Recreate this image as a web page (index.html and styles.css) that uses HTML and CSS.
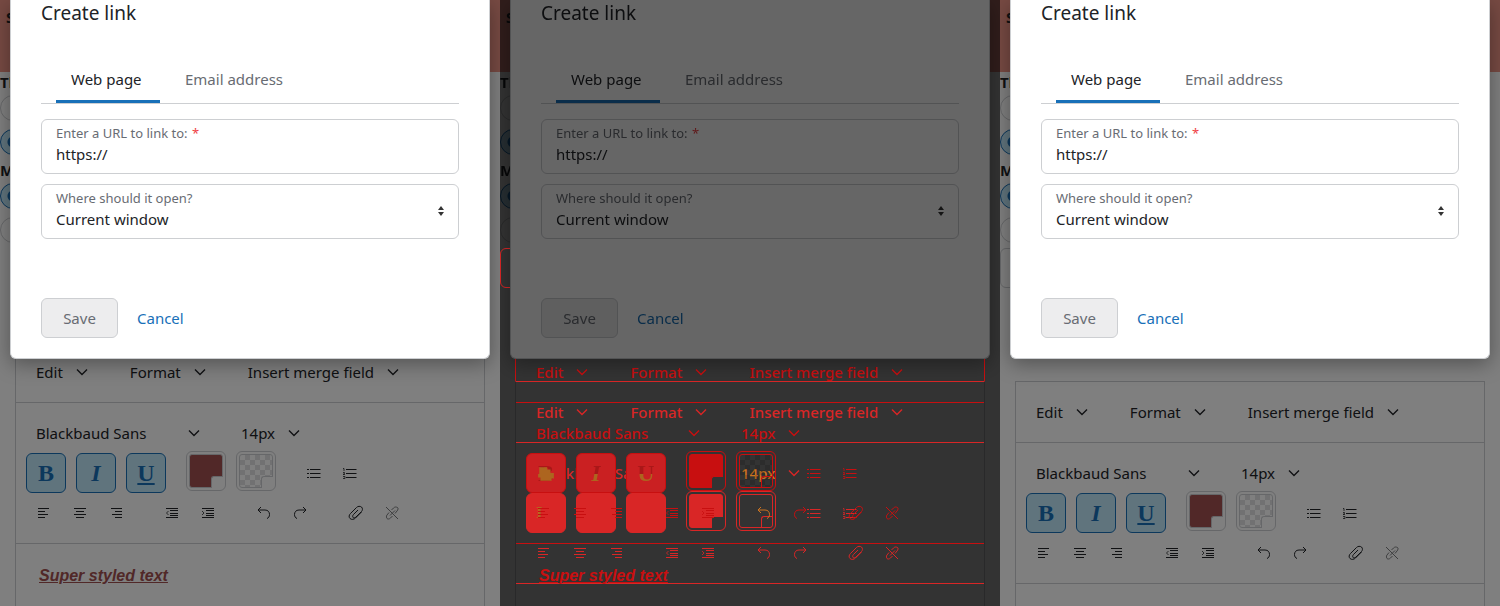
FILE: index.html
```html
<!DOCTYPE html>
<html lang="en">
<head>
<meta charset="utf-8">
<title>Create link</title>
<link rel="stylesheet" href="styles.css">
</head>
<body>
<svg class="defs" aria-hidden="true">
  <symbol id="chev" viewBox="0 0 12 12"><path d="M1 3.5 6 8.5 11 3.5" fill="none" stroke="currentColor" stroke-width="1.4"/></symbol>
  <symbol id="al" viewBox="0 0 16 16"><path d="M2 3.5h11M2 6.5h7M2 9.5h10M2 12.5h7" stroke="currentColor"/></symbol>
  <symbol id="ac" viewBox="0 0 16 16"><path d="M2 3.5h12M4 6.5h8M2 9.5h12M4 12.5h8" stroke="currentColor"/></symbol>
  <symbol id="ar" viewBox="0 0 16 16"><path d="M3 3.5h11M7 6.5h7M4 9.5h10M7 12.5h7" stroke="currentColor"/></symbol>
  <symbol id="out" viewBox="0 0 16 16"><path d="M2 3.5h12M6 5.5h8M6 8.5h8M6 10.5h8M2 12.5h12" stroke="currentColor"/><path d="M4.500 6 2.500 8l2 2" fill="none" stroke="currentColor" stroke-width=".8"/></symbol>
  <symbol id="ind" viewBox="0 0 16 16"><path d="M2 3.500h12M6 5.500h8M6 8.500h8M6 10.500h8M2 12.500h12" stroke="currentColor"/><path d="M2 6l2 2-2 2" fill="none" stroke="currentColor" stroke-width=".8"/></symbol>
  <symbol id="ul" viewBox="0 0 16 16"><path d="M1 4.500h2M1 8.500h2M1 12.500h2M4 4.500h10.500M4 8.500h10.500M4 12.500h10.500" stroke="currentColor"/></symbol>
  <symbol id="ol" viewBox="0 0 16 16"><path d="M4 4.500h10.500M4 8.500h10.500M4 12.500h10.500" stroke="currentColor"/><path d="M1 3.500h1v2.500M1 7.500h1.500v1L1 9.500h2M1 11.500h2v2H1" fill="none" stroke="currentColor" stroke-width=".8"/></symbol>
  <symbol id="un" viewBox="0 0 16 16"><path d="M5 2 2 5l3 3M2 5h7c3 0 4.500 2 4.500 4.500 0 2-1 3.500-2.500 4" fill="none" stroke="currentColor"/></symbol>
  <symbol id="re" viewBox="0 0 16 16"><path d="M11 2l3 3-3 3M14 5H7C4 5 2.500 7 2.500 9.500c0 2 1 3.500 2.500 4" fill="none" stroke="currentColor"/></symbol>
  <symbol id="clip" viewBox="0 0 16 16"><path d="M13.500 7 7.500 13c-1.500 1.500-4 2-5.500.5s-1-3.500.5-5L8.500 2.500c1.500-1.500 3.500-1.500 5-.5 1.500 1.500 1 3.500 0 4.500L8 12c-1 1-2.500 1-3 .5s-.5-2 .5-3L10 5" fill="none" stroke="currentColor"/></symbol>
  <symbol id="unl" viewBox="0 0 16 16"><path d="M2 2l12 12M7.500 5l2-2c1.500-1.500 3-1 4-.500s.500 2.500-.500 3.500L11 8.500M8.500 11l-2 2c-1.500 1.500-3 1-3.500.500S2 11 3 10l2-2.500M6 10.500l5-5" fill="none" stroke="currentColor"/></symbol>
  <symbol id="blob" viewBox="0 0 16 16"><path d="M2 2h7v2h3v3h3v5h-2v2H3v-3H1V8h1z" fill="currentColor"/></symbol>
</svg>
<main class="stage">

<section class="panel">
  <div class="page">
    <header class="banner">Sample</header>
    <h2 class="legend">Theme</h2>
    <div class="radios"><input type="radio" name="a1" aria-label="Default"><input type="radio" name="a1" aria-label="Modern" checked></div>
    <h2 class="legend second">Mode</h2>
    <div class="radios"><input type="radio" name="a2" aria-label="Light" checked><input type="radio" name="a2" aria-label="Dark"></div>
    <div class="editor high">
      <div class="menus"><button>Edit<svg><use href="#chev"/></svg></button><button>Format<svg><use href="#chev"/></svg></button><button>Insert merge field<svg><use href="#chev"/></svg></button></div>
      <div class="tools">
        <div class="row fonts"><button class="family">Blackbaud Sans<svg><use href="#chev"/></svg></button><button>14px<svg><use href="#chev"/></svg></button></div>
        <div class="row marks"><button class="mark b">B</button><button class="mark i">I</button><button class="mark u">U</button><span class="group swatches"><button class="swatch" aria-label="Font color"><span class="chip"></span></button><button class="swatch" aria-label="Background color"><span class="chip check"></span></button></span><span class="group"><button class="ico" aria-label="Bulleted list"><svg><use href="#ul"/></svg></button><button class="ico" aria-label="Numbered list"><svg><use href="#ol"/></svg></button></span></div>
        <div class="row icons"><span class="group"><button class="ico" aria-label="Align left"><svg><use href="#al"/></svg></button><button class="ico" aria-label="Align center"><svg><use href="#ac"/></svg></button><button class="ico" aria-label="Align right"><svg><use href="#ar"/></svg></button></span><span class="group"><button class="ico" aria-label="Outdent"><svg><use href="#out"/></svg></button><button class="ico" aria-label="Indent"><svg><use href="#ind"/></svg></button></span><span class="group"><button class="ico" aria-label="Undo"><svg><use href="#un"/></svg></button><button class="ico" aria-label="Redo"><svg><use href="#re"/></svg></button></span><span class="group"><button class="ico" aria-label="Link"><svg><use href="#clip"/></svg></button><button class="ico off" aria-label="Unlink"><svg><use href="#unl"/></svg></button></span></div>
      </div>
      <p class="content">Super styled text</p>
    </div>
  </div>
  <div class="shade"></div>
  <form class="modal">
    <h1>Create link</h1>
    <nav class="tabs"><a class="on" href="#web">Web page</a><a href="#email">Email address</a></nav>
    <div class="field"><label for="url1">Enter a URL to link to: <span class="req">*</span></label><input id="url1" type="text" value="https://"></div>
    <div class="field"><label for="open1">Where should it open?</label><select id="open1"><option>Current window</option></select><svg class="sort" viewBox="0 0 8 12"><path d="M4 1l3 4H1zM4 11l3-4H1z"/></svg></div>
    <div class="actions"><button class="save" type="button" disabled>Save</button><button class="cancel" type="button">Cancel</button></div>
  </form>
</section>

<section class="panel dim">
  <div class="page">
    <header class="banner">Sample</header>
    <h2 class="legend">Theme</h2>
    <div class="radios"><input type="radio" name="b1" aria-label="Default"><input type="radio" name="b1" aria-label="Modern" checked></div>
    <h2 class="legend second">Mode</h2>
    <div class="radios"><input type="radio" name="b2" aria-label="Light" checked><input type="radio" name="b2" aria-label="Dark"></div>
    <div class="extra"></div>
    <div class="editor"></div>
  </div>
  <div class="shade"></div>
  <div class="layer after">
    <div class="extra"></div>
    <div class="editor">
      <div class="menus"><button>Edit<svg><use href="#chev"/></svg></button><button>Format<svg><use href="#chev"/></svg></button><button>Insert merge field<svg><use href="#chev"/></svg></button></div>
      <div class="tools">
        <div class="row fonts"><button class="family">Blackbaud Sans<svg><use href="#chev"/></svg></button><button><span class="mix">14px</span><svg><use href="#chev"/></svg></button></div>
        <div class="row marks"><button class="mark stem" aria-label="Bold">I</button><button class="mark" aria-label="Italic"></button><button class="mark" aria-label="Underline"></button><span class="group swatches"><button class="swatch" aria-label="Font color"><span class="chip"></span></button><button class="swatch" aria-label="Background color"><span class="chip check"></span></button></span><span class="group"><button class="ico" aria-label="Bulleted list"><svg><use href="#ul"/></svg></button><button class="ico" aria-label="Numbered list"><svg><use href="#ol"/></svg></button></span></div>
        <div class="row icons"><span class="group"><button class="ico" aria-label="Align left"><svg><use href="#al"/></svg></button><button class="ico" aria-label="Align center"><svg><use href="#ac"/></svg></button><button class="ico" aria-label="Align right"><svg><use href="#ar"/></svg></button></span><span class="group"><button class="ico" aria-label="Outdent"><svg><use href="#out"/></svg></button><button class="ico" aria-label="Indent"><svg><use href="#ind"/></svg></button></span><span class="group"><button class="ico" aria-label="Undo"><svg><use href="#un"/></svg></button><button class="ico" aria-label="Redo"><svg><use href="#re"/></svg></button></span><span class="group"><button class="ico" aria-label="Link"><svg><use href="#clip"/></svg></button><button class="ico" aria-label="Unlink"><svg><use href="#unl"/></svg></button></span></div>
      </div>
    </div>
  </div>
  <div class="layer before">
    <div class="editor">
      <div class="menus"><button>Edit<svg><use href="#chev"/></svg></button><button>Format<svg><use href="#chev"/></svg></button><button>Insert merge field<svg><use href="#chev"/></svg></button></div>
      <div class="tools">
        <div class="row fonts"><button class="family">Blackbaud Sans<svg><use href="#chev"/></svg></button><button>14px<svg><use href="#chev"/></svg></button></div>
        <div class="row marks"><button class="mark b"><span>B</span><svg class="blob"><use href="#blob"/></svg></button><button class="mark i"><span>I</span></button><button class="mark u"><span>U</span></button><span class="group swatches"><button class="swatch" aria-label="Font color"><span class="chip"></span></button><button class="swatch" aria-label="Background color"><span class="chip check"></span></button></span><span class="group"><button class="ico" aria-label="Bulleted list"><svg><use href="#ul"/></svg></button><button class="ico" aria-label="Numbered list"><svg><use href="#ol"/></svg></button></span></div>
        <div class="row icons"><span class="group"><button class="ico" aria-label="Align left"><svg><use href="#al"/></svg></button><button class="ico" aria-label="Align center"><svg><use href="#ac"/></svg></button><button class="ico" aria-label="Align right"><svg><use href="#ar"/></svg></button></span><span class="group"><button class="ico" aria-label="Outdent"><svg><use href="#out"/></svg></button><button class="ico" aria-label="Indent"><svg><use href="#ind"/></svg></button></span><span class="group"><button class="ico mix" aria-label="Undo"><svg><use href="#un"/></svg></button><button class="ico" aria-label="Redo"><svg><use href="#re"/></svg></button></span><span class="group"><button class="ico" aria-label="Link"><svg><use href="#clip"/></svg></button><button class="ico" aria-label="Unlink"><svg><use href="#unl"/></svg></button></span></div>
      </div>
      <p class="content">Super styled text</p>
    </div>
  </div>
  <form class="modal">
    <h1>Create link</h1>
    <nav class="tabs"><a class="on" href="#web">Web page</a><a href="#email">Email address</a></nav>
    <div class="field"><label for="url2">Enter a URL to link to: <span class="req">*</span></label><input id="url2" type="text" value="https://"></div>
    <div class="field"><label for="open2">Where should it open?</label><select id="open2"><option>Current window</option></select><svg class="sort" viewBox="0 0 8 12"><path d="M4 1l3 4H1zM4 11l3-4H1z"/></svg></div>
    <div class="actions"><button class="save" type="button" disabled>Save</button><button class="cancel" type="button">Cancel</button></div>
  </form>
</section>

<section class="panel">
  <div class="page">
    <header class="banner">Sample</header>
    <h2 class="legend">Theme</h2>
    <div class="radios"><input type="radio" name="c1" aria-label="Default"><input type="radio" name="c1" aria-label="Modern" checked></div>
    <h2 class="legend second">Mode</h2>
    <div class="radios"><input type="radio" name="c2" aria-label="Light" checked><input type="radio" name="c2" aria-label="Dark"></div>
    <div class="extra"></div>
    <div class="editor">
      <div class="menus"><button>Edit<svg><use href="#chev"/></svg></button><button>Format<svg><use href="#chev"/></svg></button><button>Insert merge field<svg><use href="#chev"/></svg></button></div>
      <div class="tools">
        <div class="row fonts"><button class="family">Blackbaud Sans<svg><use href="#chev"/></svg></button><button>14px<svg><use href="#chev"/></svg></button></div>
        <div class="row marks"><button class="mark b">B</button><button class="mark i">I</button><button class="mark u">U</button><span class="group swatches"><button class="swatch" aria-label="Font color"><span class="chip"></span></button><button class="swatch" aria-label="Background color"><span class="chip check"></span></button></span><span class="group"><button class="ico" aria-label="Bulleted list"><svg><use href="#ul"/></svg></button><button class="ico" aria-label="Numbered list"><svg><use href="#ol"/></svg></button></span></div>
        <div class="row icons"><span class="group"><button class="ico" aria-label="Align left"><svg><use href="#al"/></svg></button><button class="ico" aria-label="Align center"><svg><use href="#ac"/></svg></button><button class="ico" aria-label="Align right"><svg><use href="#ar"/></svg></button></span><span class="group"><button class="ico" aria-label="Outdent"><svg><use href="#out"/></svg></button><button class="ico" aria-label="Indent"><svg><use href="#ind"/></svg></button></span><span class="group"><button class="ico" aria-label="Undo"><svg><use href="#un"/></svg></button><button class="ico" aria-label="Redo"><svg><use href="#re"/></svg></button></span><span class="group"><button class="ico" aria-label="Link"><svg><use href="#clip"/></svg></button><button class="ico off" aria-label="Unlink"><svg><use href="#unl"/></svg></button></span></div>
      </div>
    </div>
  </div>
  <div class="shade"></div>
  <form class="modal">
    <h1>Create link</h1>
    <nav class="tabs"><a class="on" href="#web">Web page</a><a href="#email">Email address</a></nav>
    <div class="field"><label for="url3">Enter a URL to link to: <span class="req">*</span></label><input id="url3" type="text" value="https://"></div>
    <div class="field"><label for="open3">Where should it open?</label><select id="open3"><option>Current window</option></select><svg class="sort" viewBox="0 0 8 12"><path d="M4 1l3 4H1zM4 11l3-4H1z"/></svg></div>
    <div class="actions"><button class="save" type="button" disabled>Save</button><button class="cancel" type="button">Cancel</button></div>
  </form>
</section>
</main>
</body>
</html>
```
FILE: styles.css
```css
* { box-sizing: border-box; }
body { margin: 0; font: 15px/22px "Noto Sans", "Open Sans", sans-serif; color: #212327; }
button, input, select { font: inherit; color: inherit; margin: 0; padding: 0; border: 0; background: none; }
button { white-space: nowrap; }
.defs { position: absolute; width: 0; height: 0; }
.stage { display: grid; grid-template-columns: repeat(3, 1fr); min-height: 100vh; }
.panel { position: relative; overflow: hidden; display: flex; }
.page { flex: 1; min-width: 0; display: flex; flex-direction: column; background: #fff; }
.shade { position: absolute; inset: 0; background: rgba(0, 0, 0, .5); }

/* sample page */
.banner { height: 72px; padding: 6px; background: #ef9486; font-weight: 700; }
.legend { margin: 0; height: 23px; font-size: 15px; line-height: 20px; font-weight: 700; }
.legend.second { height: 28px; line-height: 30px; }
.radios { display: flex; flex-direction: column; gap: 8px; }
.radios input { appearance: none; width: 26px; height: 26px; border: 1px solid #cdcfd2; border-radius: 50%; }
.radios input:checked { border-color: #1870b8; background: radial-gradient(circle, #1870b8 5px, #c1e8fb 6px); }
.extra { width: 200px; height: 40px; margin-top: 5px; border: 1px solid #cdcfd2; border-radius: 6px; }

/* editor */
.editor { flex: 1 0 auto; margin: 93px 15px 0; border: 1px solid #cdcfd2; border-bottom: 0; }
.editor.high { margin-top: 98px; }
.menus { display: flex; align-items: center; gap: 22px; height: 61px; padding: 0 10px; border-bottom: 1px solid #cdcfd2; }
.menus button, .fonts button { display: flex; align-items: center; justify-content: space-between; gap: 13px; padding: 0 10px; }
.menus svg, .fonts svg { width: 12px; height: 12px; }
.tools { padding: 10px; border-bottom: 1px solid #cdcfd2; }
.row { display: flex; height: 40px; align-items: center; gap: 20px; }
.row.fonts { gap: 21px; }
.family { width: 184px; }
.row.marks { gap: 10px; }
.group { display: flex; }
.marks .group { margin-left: 10px; }
.swatches { gap: 10px; }
.mark { display: grid; place-items: center; width: 40px; height: 40px; border: 1px solid #1870b8; border-radius: 6px; background: #c1e8fb; color: #1870b8; font: 700 24px/28px "Liberation Serif", serif; }
.i { font-style: italic; }
.u { text-decoration: underline; }
.swatch { width: 40px; height: 40px; margin-top: -4px; padding: 2px; border: 1px solid #cdcfd2; border-radius: 6px; }
.chip { position: relative; display: block; height: 34px; border: 1px solid #cdcfd2; border-radius: 3px; background: #a25050; }
.chip::after { content: ""; position: absolute; right: -1px; bottom: -1px; width: 11px; height: 11px; border: 1px solid #cdcfd2; border-width: 1px 0 0 1px; border-radius: 3px 0 0; background: #fff; }
.check { background: repeating-conic-gradient(#e2e3e4 0 25%, #fff 0 50%) 0 0 / 10px 10px; }
.ico { display: grid; place-items: center; width: 36px; height: 40px; }
.ico svg { width: 16px; height: 16px; }
.off { opacity: .6; }
.content { margin: 21px 23px; font: italic 700 16px/22px "Liberation Sans", sans-serif; color: #a25050; text-decoration: underline; }

/* comparison layers */
.dim .page, .dim .modal { filter: brightness(.4); }
.dim .page .extra { visibility: hidden; }
.layer { position: absolute; inset: 0; display: flex; flex-direction: column; color: var(--ink); font-weight: 500; }
.layer .editor, .layer .menus, .layer .tools { border-color: var(--ink); }
.layer .editor { border-left-color: transparent; border-right-color: transparent; }
.layer .menus svg, .layer .fonts svg { stroke-width: 2; }
.after { --ink: #d92626; padding-top: 243px; }
.after .extra { border-color: var(--ink); }
.before { --ink: #c80f10; padding-top: 341px; }
.before .editor { margin-top: 0; background: linear-gradient(var(--ink), var(--ink)) 0 0 / 1px 40px no-repeat border-box, linear-gradient(var(--ink), var(--ink)) 100% 0 / 1px 40px no-repeat border-box; }
.layer .mark { border-color: var(--ink); background: #d92626; }
.before .mark { position: relative; background: #ca2022; text-decoration: none; }
.before .mark span { background: linear-gradient(#aa1718 55%, #ad651f 55%); background-clip: text; color: transparent; }
.before .b span { background: #aa1718; background-clip: text; }
.before .blob { position: absolute; left: 10px; top: 11px; width: 18px; height: 18px; color: #ad651f; }
.after .stem { place-items: center start; padding-left: 9px; color: #b36a20; font-size: 17px; }
.layer .swatch, .layer .chip, .layer .chip::after { border-color: var(--ink); }
.layer .chip { background: var(--ink); }
.layer .chip::after { background: #333; }
.layer .check, .layer .check::after { background: none; }
.before .check { background: repeating-conic-gradient(rgba(0, 0, 0, .14) 0 25%, transparent 0 50%) 0 0 / 10px 10px; }
.mix { color: #cd7420; }
.before .content { color: var(--ink); }

/* dialog */
.modal { position: absolute; top: 0; left: 10px; right: 10px; padding: 0 30px 20px; border: 1px solid #cdcfd2; border-top: 0; border-radius: 0 0 6px 6px; background: #fff; box-shadow: 0 5px 20px rgba(0, 0, 0, .35); }
.modal h1 { margin: 0 0 31px; font-size: 19px; line-height: 26px; font-weight: 400; }
.tabs { display: flex; gap: 10px; padding-left: 15px; border-bottom: 1px solid #cdcfd2; }
.tabs a { min-width: 104px; padding: 11px 15px 10px; border-bottom: 3px solid transparent; color: #686c73; text-decoration: none; }
.tabs .on { border-color: #1870b8; color: #212327; }
.field { position: relative; margin-top: 10px; padding: 4px 14px 8px; border: 1px solid #cdcfd2; border-radius: 6px; }
.tabs + .field { margin-top: 15px; }
.field label { display: block; font-size: 13px; line-height: 19px; color: #686c73; }
.req { margin-left: 1px; color: #ef4044; }
.field input, .field select { display: block; width: 100%; height: 22px; appearance: none; outline: 0; }
.sort { position: absolute; right: 13px; top: 20px; width: 8px; height: 12px; fill: #333; }
.actions { display: flex; align-items: center; gap: 19px; margin-top: 59px; }
.save { min-width: 77px; height: 40px; padding: 0 20px; border: 1px solid #cdcfd2; border-radius: 6px; background: #ededee; color: #686c73; }
.cancel { color: #1870b8; }
```
